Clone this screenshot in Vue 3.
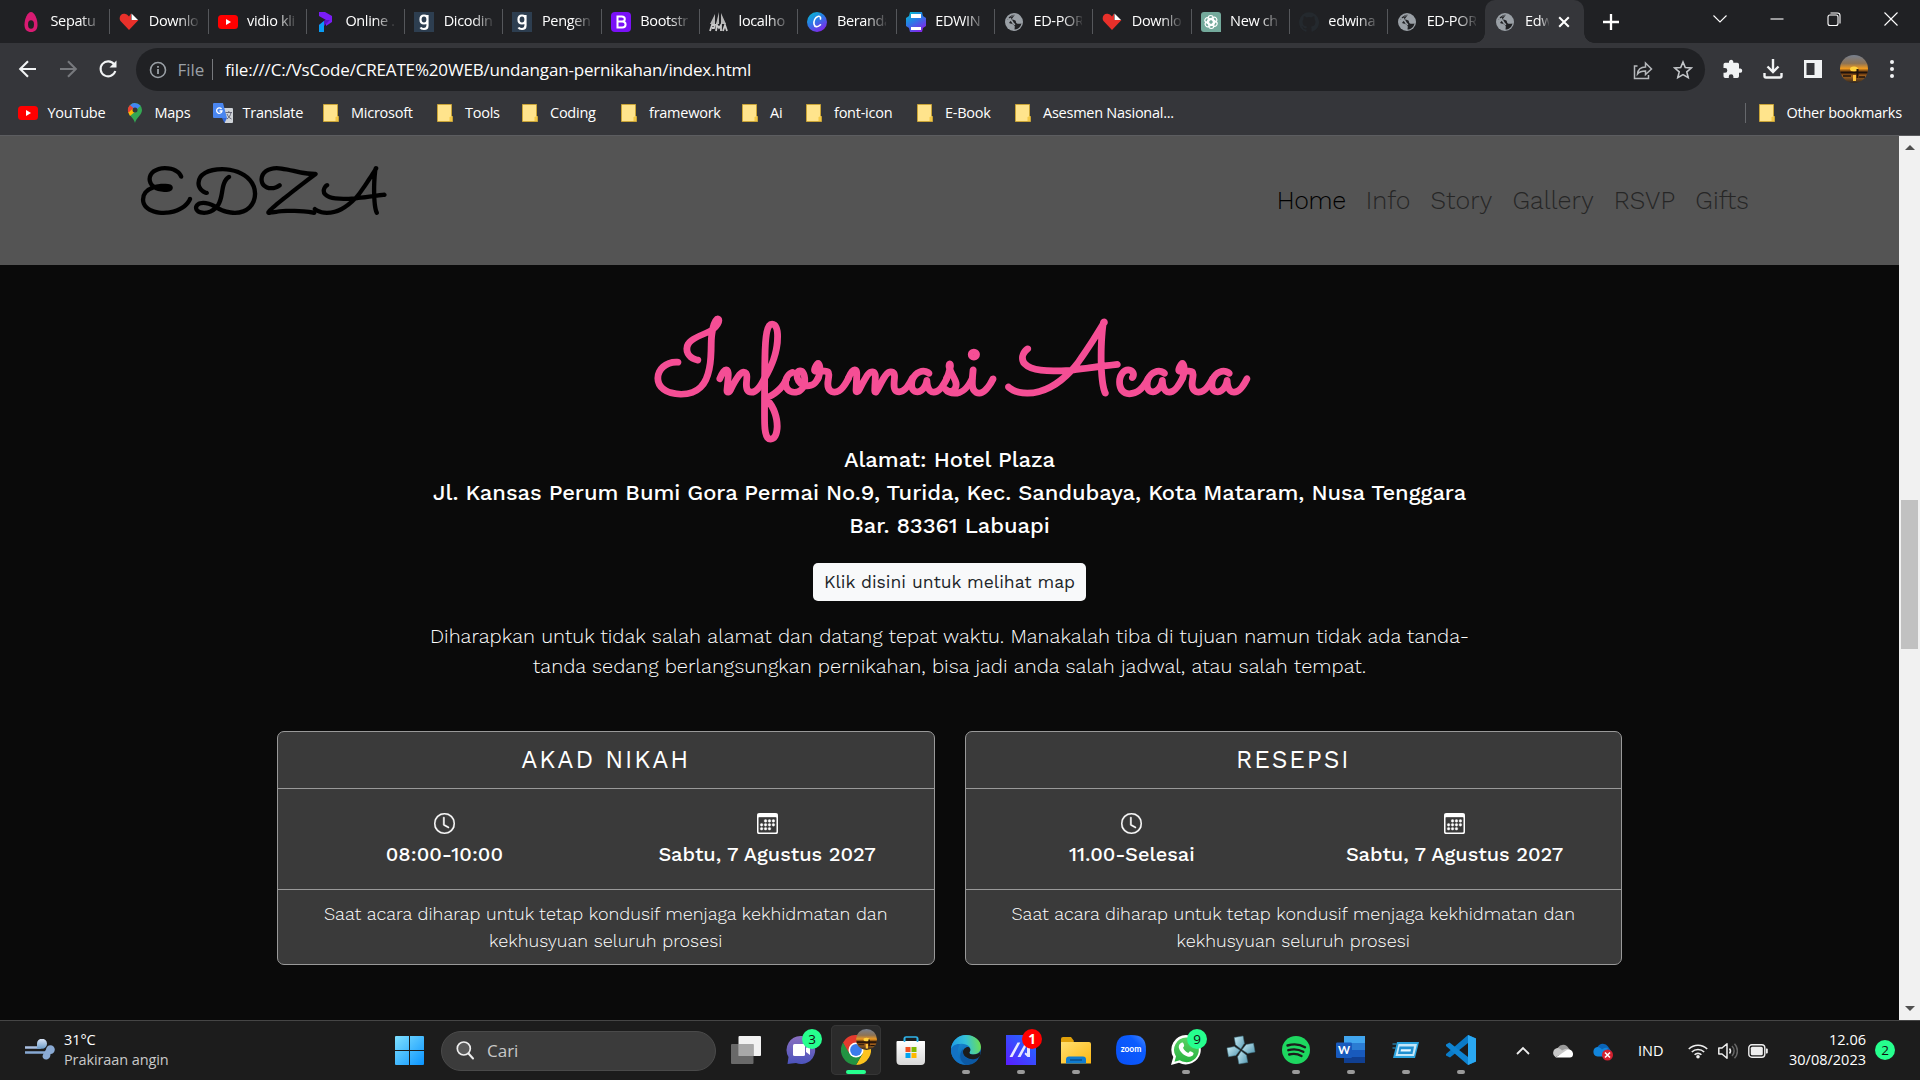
<script setup>
const tabs = [
  { icon: 'drop', title: 'Sepatu' },
  { icon: 'heart', title: 'Downlo' },
  { icon: 'youtube', title: 'vidio kli' },
  { icon: 'pay', title: 'Online .' },
  { icon: 'nine', title: 'Dicodin' },
  { icon: 'nine', title: 'Pengen' },
  { icon: 'bootstrap', title: 'Bootstr' },
  { icon: 'pma', title: 'localho' },
  { icon: 'canva', title: 'Beranda' },
  { icon: 'printer', title: 'EDWIN' },
  { icon: 'globe', title: 'ED-POR' },
  { icon: 'heart', title: 'Downlo' },
  { icon: 'gpt', title: 'New ch' },
  { icon: 'github', title: 'edwina' },
  { icon: 'globe', title: 'ED-POR' },
]

const bookmarks = [
  { icon: 'youtube', title: 'YouTube', width: 107 },
  { icon: 'maps', title: 'Maps', width: 88 },
  { icon: 'translate', title: 'Translate', width: 110 },
  { icon: 'folder', title: 'Microsoft', width: 114 },
  { icon: 'folder', title: 'Tools', width: 85 },
  { icon: 'folder', title: 'Coding', width: 99 },
  { icon: 'folder', title: 'framework', width: 121 },
  { icon: 'folder', title: 'Ai', width: 64 },
  { icon: 'folder', title: 'font-icon', width: 111 },
  { icon: 'folder', title: 'E-Book', width: 98 },
  { icon: 'folder', title: 'Asesmen Nasional...', width: 170 },
]

const links = ['Home', 'Info', 'Story', 'Gallery', 'RSVP', 'Gifts']

const events = [
  { name: 'AKAD NIKAH', time: '08:00-10:00', date: 'Sabtu, 7 Agustus 2027' },
  { name: 'RESEPSI', time: '11.00-Selesai', date: 'Sabtu, 7 Agustus 2027' },
]

const apps = [
  { icon: 'taskview' },
  { icon: 'teams', badge: '3' },
  { icon: 'chrome', active: true },
  { icon: 'store' },
  { icon: 'edge', open: true },
  { icon: 'myasus', badge: '1', alert: true, open: true },
  { icon: 'explorer', open: true },
  { icon: 'zoom', label: 'zoom' },
  { icon: 'whatsapp', badge: '9', open: true },
  { icon: 'ppsspp' },
  { icon: 'spotify', open: true },
  { icon: 'word', label: 'W', open: true },
  { icon: 'run', open: true },
  { icon: 'vscode', open: true },
]
</script>

<template>
  <div class="screen">
    <svg class="sprites" width="0" height="0">
      <defs>
        <linearGradient id="gCanva" x1="0" y1="0" x2=".6" y2="1"><stop offset="0" stop-color="#00c4cc" /><stop offset=".5" stop-color="#2a7be6" /><stop offset="1" stop-color="#7d2ae8" /></linearGradient>
        <linearGradient id="gWin" x1="0" y1="0" x2="1" y2="1"><stop offset="0" stop-color="#7fe0ff" /><stop offset="1" stop-color="#0a94ff" /></linearGradient>
        <linearGradient id="gTeams" x1="0" y1="0" x2="0" y2="1"><stop offset="0" stop-color="#8a70c0" /><stop offset="1" stop-color="#4b53bc" /></linearGradient>
        <linearGradient id="gEdge" x1="0" y1=".4" x2="1" y2=".3"><stop offset="0" stop-color="#1e9ee8" /><stop offset=".5" stop-color="#35c1d8" /><stop offset="1" stop-color="#6ee04d" /></linearGradient>
        <linearGradient id="gEdge2" x1="0" y1="0" x2=".8" y2="1"><stop offset="0" stop-color="#1b9de2" /><stop offset="1" stop-color="#0a4f9e" /></linearGradient>
        <linearGradient id="gAsus" x1="0" y1="1" x2="1" y2="0"><stop offset="0" stop-color="#5a1cff" /><stop offset="1" stop-color="#1a75ff" /></linearGradient>
        <linearGradient id="gFolder" x1="0" y1="0" x2="1" y2="1"><stop offset="0" stop-color="#ffdf70" /><stop offset="1" stop-color="#fdb813" /></linearGradient>
        <linearGradient id="gZoom" x1="0" y1="1" x2="1" y2="0"><stop offset="0" stop-color="#0a50f5" /><stop offset=".7" stop-color="#0b5cff" /><stop offset="1" stop-color="#4d8dff" /></linearGradient>
        <linearGradient id="gWa" x1="0" y1="0" x2="0" y2="1"><stop offset="0" stop-color="#5bd066" /><stop offset="1" stop-color="#27b43e" /></linearGradient>
        <linearGradient id="gPsp" x1="0" y1="0" x2="1" y2="1"><stop offset="0" stop-color="#c4e8f2" /><stop offset="1" stop-color="#5b9db5" /></linearGradient>
        <linearGradient id="gSun" x1="0" y1="0" x2="0" y2="1"><stop offset="0" stop-color="#77808f" /><stop offset=".3" stop-color="#8d7355" /><stop offset=".48" stop-color="#ef9a20" /><stop offset=".62" stop-color="#3a1c0b" /><stop offset=".75" stop-color="#a8641c" /><stop offset="1" stop-color="#2b2622" /></linearGradient>
        <linearGradient id="gWind" x1="0" y1="0" x2="0" y2="1"><stop offset="0" stop-color="#dbe6f8" /><stop offset="1" stop-color="#6d9cc9" /></linearGradient>
        <linearGradient id="gStore" x1="0" y1="0" x2="0" y2="1"><stop offset="0" stop-color="#fff" /><stop offset="1" stop-color="#d8d8d8" /></linearGradient>
      </defs>

      <symbol id="drop" viewBox="0 0 20 20"><path d="M10 0C13.5 0 16.500 7 16.500 12.500S14 20 10 20 3.500 18 3.500 12.500 6.500 0 10 0z" fill="#d81b72" /><ellipse cx="10" cy="12.500" rx="3" ry="4.200" fill="#202124" /></symbol>
      <symbol id="heart" viewBox="0 0 20 20"><path d="M10 18L1.500 9C-1 5 2.500.5 6.500 2 8.500 2.500 10 4.500 10 4.500L12 1.500V8h7.500z" fill="#e8302a" /><path d="M12.500 1.500L19 8h-6.500z" fill="#fff" /></symbol>
      <symbol id="youtube" viewBox="0 0 20 20"><rect y="3" width="20" height="14" rx="3.500" fill="#f00" /><path d="M8 7l5 3-5 3z" fill="#fff" /></symbol>
      <symbol id="pay" viewBox="0 0 20 20"><path d="M3 0h6l7 4v6l-6 4V8L3 4z" fill="#7a1cf5" /><path d="M3 13l6-5h5l-6 6z" fill="#5514c9" /><path d="M3 13l5-4v11H3z" fill="#0a9cf5" /></symbol>
      <symbol id="nine" viewBox="0 0 20 20"><path d="M0 0h20v20H0z" fill="#2d3e50" /><path d="M13.500 7.500c0 2.500-1.500 4-3.500 4s-3.500-1.500-3.500-4 1.500-4 3.500-4 3.500 1.500 3.500 4zM13.500 3v10.500c0 2.500-1.500 3.500-3.500 3.500-1.500 0-3-.5-3.500-1.500" fill="none" stroke="#fff" stroke-width="2.200" /></symbol>
      <symbol id="bootstrap" viewBox="0 0 20 20"><rect width="20" height="20" rx="4" fill="#7a11f7" /><path d="M6.500 4.500h4.300c4 0 4 5 0 5H6.500h4.700c4.500 0 4.500 6 0 6H6.500z" fill="none" stroke="#fff" stroke-width="2" /></symbol>
      <symbol id="pma" viewBox="0 0 20 20"><path d="M1 12L6 2v10zM7 12l3-12v12zM12 12V1l5 11z" fill="#b5b5b5" /><path d="M1 19l2-6h3l-1 3H3M7 19l1-6 2 3 2-3v6M14 19l2-6 2 6" fill="none" stroke="#c9c9c9" stroke-width="1.800" /></symbol>
      <symbol id="canva" viewBox="0 0 20 20"><circle cx="10" cy="10" r="10" fill="url(#gCanva)" /><path d="M13.500 7c.5-2-1-3.200-2.700-2.500C8 5.500 6.500 9 7 12s3.500 3.800 6.500.8" fill="none" stroke="#fff" stroke-width="1.600" stroke-linecap="round" /></symbol>
      <symbol id="printer" viewBox="0 0 20 20"><path d="M4 0h12l1 4 3 2v8l-3 2-1 4H4l-1-4-3-2V6l3-2z" fill="url(#gCanva)" /><path d="M5 2h10v4H5zM5 15h10v3H5z" fill="#fff" /></symbol>
      <symbol id="globe" viewBox="0 0 20 20"><circle cx="10" cy="10" r="9" fill="#9aa0a6" /><path d="M11 2.500c-4 1-5 3.500-3 5 2 .5 4 .5 4 2.500s3 2 5.500 1.500c-1 4-4 6-7 6 0-2 1-3-.5-4.500s-3-1-5-2M3.500 8C4.500 4.500 8 3 11 2.500" fill="#202124" /><path d="M4 6.500c2 1.500 4 1.500 4.500 3.500s2 1.500 2 3" fill="none" stroke="#9aa0a6" stroke-width="1.600" /></symbol>
      <symbol id="gpt" viewBox="0 0 20 20"><path d="M3 0h14a3 3 0 0 1 3 3v17H3a3 3 0 0 1-3-3V3a3 3 0 0 1 3-3z" fill="#74aa9c" /><g fill="none" stroke="#fff" stroke-width="1.100"><rect x="7.200" y="3.500" width="5" height="10" rx="2.500" /><rect x="7.200" y="3.500" width="5" height="10" rx="2.500" transform="rotate(60 10 10)" /><rect x="7.200" y="3.500" width="5" height="10" rx="2.500" transform="rotate(120 10 10)" /><rect x="7.200" y="3.500" width="5" height="10" rx="2.500" transform="rotate(180 10 10)" /><rect x="7.200" y="3.500" width="5" height="10" rx="2.500" transform="rotate(240 10 10)" /><rect x="7.200" y="3.500" width="5" height="10" rx="2.500" transform="rotate(300 10 10)" /></g></symbol>
      <symbol id="github" viewBox="0 0 16 16"><path fill="#24292e" d="M8 .2a8 8 0 0 0-2.530 15.590c.4.070.55-.17.550-.38v-1.490c-2.230.48-2.700-.95-2.700-.95-.36-.92-.89-1.170-.89-1.170-.73-.5.050-.49.050-.49.800.06 1.230.83 1.230.83.710 1.220 1.870.87 2.330.66.070-.52.280-.87.510-1.070-1.780-.2-3.640-.89-3.640-3.950 0-.87.310-1.590.82-2.150-.08-.2-.36-1.020.08-2.120 0 0 .67-.21 2.200.82a7.600 7.600 0 0 1 4 0c1.530-1.040 2.200-.82 2.200-.82.440 1.100.16 1.920.08 2.120.51.560.82 1.270.82 2.150 0 3.070-1.870 3.750-3.650 3.950.29.250.54.730.54 1.480v2.200c0 .21.150.46.550.38A8 8 0 0 0 8 .2z" /></symbol>
      <symbol id="maps" viewBox="0 0 20 20"><path d="M10 20C9 15 3 12 3 7a7 7 0 0 1 14 0c0 5-6 8-7 13z" fill="#34a853" /><path d="M5 2.300A7 7 0 0 0 3.500 10L10 7z" fill="#ea4335" /><path d="M3.300 9.500L10 3l2 4-7 6z" fill="#fbbc04" /><path d="M5 2.300A7 7 0 0 1 15.500 2.700L10 8z" fill="#4285f4" /><path d="M5 2.300L8.500 5 3.300 9.500C2.700 6.500 3.500 4 5 2.300z" fill="#ea4335" /><circle cx="10" cy="7" r="2.500" fill="#35363a" /></symbol>
      <symbol id="translate" viewBox="0 0 20 20"><path d="M8 5h11a1 1 0 0 1 1 1v13a1 1 0 0 1-1 1h-7z" fill="#cfd3d8" /><path d="M1 0h9l4 15H1a1 1 0 0 1-1-1V1a1 1 0 0 1 1-1z" fill="#4a86f0" /><path d="M9 15h5l-2.500 5z" fill="#3367d6" /><path d="M8.500 6A2.700 2.700 0 1 0 9 8H6.500" fill="none" stroke="#fff" stroke-width="1.300" /><path d="M12.500 9.500H19M15.800 8v1.500M18 9.500c-.5 3-2 5-4 6.500M14 11c.8 2 2.200 4 4.500 5" fill="none" stroke="#667" stroke-width="1" /></symbol>
      <symbol id="folder" viewBox="0 0 20 20"><path d="M.5 1.500h14v11.500l1 .5v5H.5z" fill="#ffe48c" stroke="#c9a437" /><path d="M12.500 18v-4l2.500-1v5z" fill="#f3c846" /></symbol>

      <symbol id="sunset" viewBox="0 0 28 28"><circle cx="14" cy="14" r="14" fill="url(#gSun)" /><ellipse cx="14" cy="14" rx="4" ry="2.500" fill="#ffd23f" /><path d="M13 20h3v6h-3z" fill="#ffc23a" /><path d="M16.500 14h2v9h-2z" fill="#20120a" /><path d="M1 17.500h26M3 21h8M19 22h6" stroke="#1c120c" stroke-width="1.500" /></symbol>

      <symbol id="clock" viewBox="0 0 16 16"><path d="M8 3.500a.5.5 0 0 0-1 0V9a.5.5 0 0 0 .252.434l3.500 2a.5.5 0 0 0 .496-.868L8 8.710z" /><path d="M8 16A8 8 0 1 0 8 0a8 8 0 0 0 0 16m7-8A7 7 0 1 1 1 8a7 7 0 0 1 14 0" /></symbol>
      <symbol id="calendar" viewBox="0 0 16 16"><path d="M14 0H2a2 2 0 0 0-2 2v12a2 2 0 0 0 2 2h12a2 2 0 0 0 2-2V2a2 2 0 0 0-2-2M1 3.857C1 3.384 1.448 3 2 3h12c.552 0 1 .384 1 .857v10.286c0 .473-.448.857-1 .857H2c-.552 0-1-.384-1-.857z" /><path d="M6.500 7a1 1 0 1 0 0-2 1 1 0 0 0 0 2m3 0a1 1 0 1 0 0-2 1 1 0 0 0 0 2m3 0a1 1 0 1 0 0-2 1 1 0 0 0 0 2m-9 3a1 1 0 1 0 0-2 1 1 0 0 0 0 2m3 0a1 1 0 1 0 0-2 1 1 0 0 0 0 2m3 0a1 1 0 1 0 0-2 1 1 0 0 0 0 2m3 0a1 1 0 1 0 0-2 1 1 0 0 0 0 2m-9 3a1 1 0 1 0 0-2 1 1 0 0 0 0 2m3 0a1 1 0 1 0 0-2 1 1 0 0 0 0 2m3 0a1 1 0 1 0 0-2 1 1 0 0 0 0 2" /></symbol>

      <symbol id="taskview" viewBox="0 0 30 30"><rect x="7.500" y="1" width="22.500" height="20" rx="1" fill="#f2f2f2" /><rect x="0" y="9" width="22.500" height="20" rx="1" fill="#777" opacity=".85" /><rect x="7.500" y="9" width="15" height="12" fill="#a8a8a8" /></symbol>
      <symbol id="teams" viewBox="0 0 30 30"><path d="M15 1a14 14 0 1 1-5 27L1.500 29l1-7A14 14 0 0 1 15 1z" fill="url(#gTeams)" /><rect x="7" y="9" width="12" height="12" rx="1.500" fill="#fff" /><path d="M20 13l4-3v10l-4-3z" fill="#fff" /></symbol>
      <symbol id="chrome" viewBox="0 0 30 30"><path d="M28 7.500H15l-8.500 11L2 7.500A15 15 0 0 1 28 7.500z" fill="#e33b2e" /><path d="M28 7.500A15 15 0 0 1 15 30l6.500-11.250L15 7.500z" fill="#fcc31e" /><path d="M2 7.500A15 15 0 0 0 15 30l6.500-11.250H8.500z" fill="#229342" /><circle cx="15" cy="15" r="7.500" fill="#fff" /><circle cx="15" cy="15" r="5.900" fill="#3a7cec" /></symbol>
      <symbol id="store" viewBox="0 0 30 30"><path d="M8.500 7V3.500a1.500 1.500 0 0 1 1.500-1.500h10a1.500 1.500 0 0 1 1.500 1.500V7" fill="none" stroke="#2fb4ea" stroke-width="1.600" /><path d="M1.500 6h27a.5.5 0 0 1 .5.500V26a4 4 0 0 1-4 4H4.500A4 4 0 0 1 .5 26V7a1 1 0 0 1 1-1z" fill="url(#gStore)" /><path d="M8.500 2.500V7M21.500 2.500V7" stroke="#2fb4ea" stroke-width="1.600" /><path d="M9.500 12h5v5h-5z" fill="#f25022" /><path d="M15.500 12h5v5h-5z" fill="#7fba00" /><path d="M9.500 18h5v5h-5z" fill="#00a4ef" /><path d="M15.500 18h5v5h-5z" fill="#ffb900" /></symbol>
      <symbol id="edge" viewBox="0 0 30 30"><circle cx="15" cy="15" r="15" fill="url(#gEdge2)" /><path d="M0 14C1 5 8 0 15 0c9 0 15 6 15 12 0 5-4 7.500-8 7.500-3 0-4-1-3.500-2.200C22 12 15 8 9 9c-4 .5-8 3-9 5z" fill="url(#gEdge)" /><path d="M9 9c-4 6-3 16 6 20.800C8 30 1 25 0 16c0-5 5-7.500 9-7z" fill="#1272c4" /><path d="M12 17c0 6 7 9.500 15.500 6.500C25 28 20 30 15.500 30 9 27 7 19 12 14z" fill="#0c59a4" /><path d="M12 17c0-3 3-5.500 5.500-5 2 1 2.500 3 1 5.300-.5 1.200.5 2.200 3.500 2.200 3.500 0 6-1 7.500-3l-.5 4.500c-3 3.500-6 3.500-9 3-5-.5-8-4-8-7z" fill="#1c1c1c" /></symbol>
      <symbol id="myasus" viewBox="0 0 30 30"><path d="M0 0h30v30H0z" fill="url(#gAsus)" /><path d="M3.500 22L11.500 7.500l2.800 0-7.800 14.500zM11.500 22L19.500 7.500l2.800 0L14.500 22zM21 8h3v14h-2.500l-3-3 1-1.500 1.500 1z" fill="#e7e8ff" /></symbol>
      <symbol id="explorer" viewBox="0 0 30 30"><path d="M0 4a2 2 0 0 1 2-2h8l3 4-1 2H0z" fill="#e0a00a" /><path d="M0 7h28a2 2 0 0 1 2 2v19.500H0z" fill="url(#gFolder)" /><path d="M5 28.500v-4a3 3 0 0 1 3-3h14a3 3 0 0 1 3 3v4z" fill="#0f7cd0" /><path d="M9 25h12" stroke="#0b4f8c" stroke-width="1.500" /></symbol>
      <symbol id="zoom" viewBox="0 0 30 30"><path d="M15 0c11 0 15 4 15 15s-4 15-15 15S0 26 0 15 4 0 15 0z" fill="url(#gZoom)" /></symbol>
      <symbol id="whatsapp" viewBox="0 0 30 30"><path d="M15 0a15 14.700 0 1 1-7 27.800L0 30l2.300-8A15 14.700 0 0 1 15 0z" fill="#fff" /><path d="M15.200 2.600a12.300 12.300 0 1 1-6.400 22.600L3.500 26.700 5 21.500A12.300 12.300 0 0 1 15.200 2.600z" fill="url(#gWa)" /><path d="M10.500 7.800c1-.6 1.900 0 2.300 1.500.6 1.700.5 1.800-.8 3.400 1.200 2.500 2.700 4 5.300 5.200 1.500-1.700 1.700-2 3.300-1.100 2.200 1 2.200 1.200 1.700 2.800-.8 2-3.400 2.600-5.800 1.800C12 20 8.500 16 7.800 12.500c-.3-2 1-4 2.700-4.700z" fill="#fff" /></symbol>
      <symbol id="ppsspp" viewBox="0 0 30 30"><g transform="rotate(-10 15 15)" fill="url(#gPsp)" stroke="#40717f" stroke-width=".5"><path d="M10.500 1.500h9V9L15 14l-4.500-5z" /><path d="M10.500 28.500h9V21L15 16l-4.500 5z" /><path d="M1.500 10.500v9H9l5-4.500-5-4.500z" /><path d="M28.500 10.500v9H21L16 15l5-4.500z" /></g></symbol>
      <symbol id="spotify" viewBox="0 0 30 30"><circle cx="15" cy="15" r="14" fill="#1ed760" /><path d="M6.500 10.500c6-1.800 12.500-1.200 17.500 1.700M7.300 15.200c5.200-1.500 10.500-.9 15 1.600M8.200 19.500c4.300-1.200 8.500-.7 12.300 1.500" fill="none" stroke="#1c1c1c" stroke-width="2.400" stroke-linecap="round" /></symbol>
      <symbol id="word" viewBox="0 0 30 30"><path d="M8 1h21v7H8z" fill="#41a5ee" /><path d="M8 8h21v7H8z" fill="#2b7cd3" /><path d="M8 15h21v7H8z" fill="#185abd" /><path d="M8 22h21v6H8z" fill="#103f91" /><rect x="0" y="7.500" width="16" height="15.500" rx="1.200" fill="#185abd" /></symbol>
      <symbol id="run" viewBox="0 0 30 30"><path d="M6 7h22l-4 16H2z" fill="#2aa3df" /><path d="M7.500 9h18.500l-3 12H4.500z" fill="#c3e6f8" /><path d="M8.500 11.500h14.500l-1.500 7.500H7z" fill="#1f8fd0" /><path d="M10 14.300h10l-.5 2.200h-10z" fill="#e6f7ff" /><path d="M1.500 9h4M1.500 13h3" stroke="#2aa3df" stroke-width="1.200" /></symbol>
      <symbol id="vscode" viewBox="0 0 30 30"><path d="M22 0l8 3.500v23L22 30V8L4 22.500 0 20.500v-1.500z" fill="#0a7bc8" /><path d="M0 11v-1.500l3.500-2L22 22v8L4 14.500z" fill="#0f84d2" /><path d="M22 0l8 3.500v23L22 30z" fill="#2aa8f2" /></symbol>
    </svg>

    <header class="browser">
      <div class="tabstrip">
        <div v-for="(tab, i) in tabs" :key="i" class="tab" :class="{ last: i === tabs.length - 1 }">
          <svg class="fav"><use :href="'#' + tab.icon" /></svg>
          <span class="tab-title">{{ tab.title }}</span>
        </div>
        <div class="tab current">
          <svg class="fav"><use href="#globe" /></svg>
          <span class="tab-title">Edw</span>
          <svg class="tab-close" viewBox="0 0 10 10"><path d="M1 1l8 8M9 1L1 9" stroke="#fff" stroke-width="1.700" /></svg>
        </div>
        <svg class="new-tab" viewBox="0 0 16 16"><path d="M8 0v16M0 8h16" stroke="#fff" stroke-width="2.300" /></svg>
        <div class="window-controls">
          <svg viewBox="0 0 16 16"><path d="M1.500 4.500L8 11l6.500-6.500" /></svg>
          <svg viewBox="0 0 16 16"><path d="M1.500 8h13" /></svg>
          <svg viewBox="0 0 16 16"><rect x="2" y="4" width="10" height="10.500" rx="2" /><path d="M4.500 2h7a2.500 2.500 0 0 1 2.500 2.500v8" /></svg>
          <svg viewBox="0 0 16 16"><path d="M1.500 1.500l13 13M14.500 1.500l-13 13" /></svg>
        </div>
      </div>

      <div class="toolbar">
        <div class="nav-buttons">
          <svg viewBox="0 0 20 20" stroke="#f1f3f4"><path d="M18 10H2.500M10 2.200L2.200 10l7.800 7.800" /></svg>
          <svg viewBox="0 0 20 20" stroke="#77797d"><path d="M2 10h15.500M10 2.200l7.800 7.800-7.800 7.800" /></svg>
          <svg viewBox="0 0 20 20" stroke="#f1f3f4"><path d="M16.200 5.500A7.500 7.500 0 1 0 17.300 12" /><path d="M18.500 1.500v7h-7z" fill="#f1f3f4" stroke="none" /></svg>
        </div>
        <div class="omnibox">
          <svg class="info" viewBox="0 0 18 18"><circle cx="9" cy="9" r="7.500" fill="none" stroke="#9aa0a6" stroke-width="1.600" /><path d="M9 8v5M9 5v1.700" stroke="#9aa0a6" stroke-width="1.800" /></svg>
          <span class="scheme">File</span>
          <span class="url">file:///C:/VsCode/CREATE%20WEB/undangan-pernikahan/index.html</span>
          <svg class="share" viewBox="0 0 20 20"><path d="M4.500 6H1.500v12.500h14V15M4.500 14c.5-5 3.500-7 8-7V3l6 6-6 5.500V11c-4 0-6 .5-8 3z" fill="none" stroke="#b5b8bb" stroke-width="1.500" /></svg>
          <svg class="star" viewBox="0 0 20 20"><path d="M10 2l2.300 5.500 6 .5-4.500 3.900 1.400 5.800L10 14.600l-5.200 3.100 1.400-5.800L1.700 8l6-.5z" fill="none" stroke="#c3c6c9" stroke-width="1.600" /></svg>
        </div>
        <div class="tools">
          <svg viewBox="0 0 20 20"><path d="M17.500 9.500H16V5.500a1.700 1.700 0 0 0-1.700-1.700h-4V2.500a2.200 2.200 0 0 0-4.300 0v1.300H2.200A1.700 1.700 0 0 0 .5 5.500v3.600H2a2.300 2.300 0 0 1 0 4.600H.5v3.600A1.700 1.700 0 0 0 2.200 19h3.600v-1.400a2.300 2.300 0 0 1 4.600 0V19H14.300a1.700 1.700 0 0 0 1.700-1.700v-3.500h1.500a2.200 2.200 0 0 0 0-4.300z" fill="#f1f3f4" /></svg>
          <svg viewBox="0 0 20 20"><path d="M10 0v12M4.500 7.500L10 13l5.500-5.500M1.500 14v3a1.500 1.500 0 0 0 1.500 1.500h14a1.500 1.500 0 0 0 1.500-1.500v-3" fill="none" stroke="#f1f3f4" stroke-width="2.400" /></svg>
          <svg viewBox="0 0 20 20"><path d="M1 1h18v18H1zM3.500 4v12h8V4z" fill="#f1f3f4" fill-rule="evenodd" /></svg>
          <svg class="avatar"><use href="#sunset" /></svg>
          <svg class="kebab" viewBox="0 0 6 20" fill="#f1f3f4"><circle cx="3" cy="3" r="2" /><circle cx="3" cy="10" r="2" /><circle cx="3" cy="17" r="2" /></svg>
        </div>
      </div>

      <nav class="bookmarks">
        <div v-for="mark in bookmarks" :key="mark.title" class="bookmark" :style="{ width: mark.width + 'px' }">
          <svg :class="mark.icon === 'folder' ? 'folder' : 'site'"><use :href="'#' + mark.icon" /></svg>
          <span>{{ mark.title }}</span>
        </div>
        <div class="bookmark other">
          <svg class="folder"><use href="#folder" /></svg>
          <span>Other bookmarks</span>
        </div>
      </nav>
    </header>

    <main class="viewport">
      <div class="page">
        <div class="navbar">
          <div class="brand">EDZA</div>
          <div class="menu">
            <a v-for="(link, i) in links" :key="link" :class="{ on: i === 0 }">{{ link }}</a>
          </div>
        </div>
        <section class="info-section">
          <h1>Informasi Acara</h1>
          <p class="address">
            <span>Alamat: Hotel Plaza</span>
            <span>Jl. Kansas Perum Bumi Gora Permai No.9, Turida, Kec. Sandubaya, Kota Mataram, Nusa Tenggara</span>
            <span>Bar. 83361 Labuapi</span>
          </p>
          <a class="map-button">Klik disini untuk melihat map</a>
          <p class="note">Diharapkan untuk tidak salah alamat dan datang tepat waktu. Manakalah tiba di tujuan namun tidak ada tanda-<br />tanda sedang berlangsungkan pernikahan, bisa jadi anda salah jadwal, atau salah tempat.</p>
          <div class="cards">
            <article v-for="event in events" :key="event.name" class="card">
              <h2>{{ event.name }}</h2>
              <div class="when">
                <div>
                  <svg><use href="#clock" /></svg>
                  <span>{{ event.time }}</span>
                </div>
                <div>
                  <svg><use href="#calendar" /></svg>
                  <span>{{ event.date }}</span>
                </div>
              </div>
              <footer>Saat acara diharap untuk tetap kondusif menjaga kekhidmatan dan<br />kekhusyuan seluruh prosesi</footer>
            </article>
          </div>
        </section>
      </div>
      <div class="scrollbar">
        <i class="arrow up"></i>
        <i class="thumb"></i>
        <i class="arrow down"></i>
      </div>
    </main>

    <footer class="taskbar">
      <div class="weather">
        <svg viewBox="0 0 30 22"><path d="M0 8.500h15" stroke="#a9c0e2" stroke-width="2.400" stroke-linecap="round" /><path d="M0 13.500h22" stroke="#86a8d2" stroke-width="2.400" stroke-linecap="round" /><path d="M12 9.700V5a5 5 0 1 1 5 4.700z" fill="url(#gWind)" /><path d="M21 10.500a4.400 4.400 0 1 1 4.500 4.500c0 3-1.500 5.500-4.500 5.500a3.800 3.800 0 0 1-3.500-3.500l1-2.500z" fill="#8aaad4" /></svg>
        <div><b>31°C</b><span>Prakiraan angin</span></div>
      </div>
      <svg class="start" viewBox="0 0 29 29" fill="url(#gWin)"><path d="M1 0h13v14H0V1a1 1 0 0 1 1-1zM15 0h13a1 1 0 0 1 1 1v13H15zM0 15h14v14H1a1 1 0 0 1-1-1zM15 15h14v13a1 1 0 0 1-1 1H15z" /></svg>
      <div class="search">
        <svg viewBox="0 0 18 19"><circle cx="7.800" cy="7.500" r="6.500" fill="#5a5a5a" stroke="#eee" stroke-width="1.700" /><path d="M12.500 12.500l4.500 5" stroke="#eee" stroke-width="2" stroke-linecap="round" /></svg>
        <span>Cari</span>
      </div>
      <div class="apps">
        <div v-for="app in apps" :key="app.icon" class="app">
          <div class="tile" :class="{ active: app.active }">
            <svg class="app-icon"><use :href="'#' + app.icon" /></svg>
            <span v-if="app.label" class="label" :class="app.icon">{{ app.label }}</span>
            <i v-if="app.badge" class="badge" :class="{ alert: app.alert }">{{ app.badge }}</i>
            <svg v-if="app.active" class="profile"><use href="#sunset" /></svg>
            <i v-if="app.active || app.open" class="indicator" :class="{ wide: app.active }"></i>
          </div>
        </div>
      </div>
      <div class="tray">
        <svg class="chev" viewBox="0 0 14 9"><path d="M1 8l6-6 6 6" fill="none" stroke="#eee" stroke-width="1.800" /></svg>
        <svg class="cloud" viewBox="0 0 20 14"><path d="M5 3.500A6 6 0 0 1 15.500 4L19 8 8 11 1 8z" fill="#9a9a9a" /><path d="M4.500 4a5 5 0 0 0-2 9.200L16 5.500A4 4 0 0 0 12 5L9 6.500C8 5 6 4 4.500 4z" fill="#c8c8c8" /><path d="M2.500 13.500L13 6.500C16 4 20.500 7 20 10.500a3.200 3.200 0 0 1-3 3z" fill="#fff" /></svg>
        <svg class="drive" viewBox="0 0 20 18"><path d="M4.500 4A6 6 0 0 1 15 3.500L18 8 8 11 1 8z" fill="#0a64b8" /><path d="M4.500 4a4.800 4.800 0 0 0 0 9.500H12L15 5C12 4 10 5.500 9 6.500 8 5 6 4 4.500 4z" fill="#1285db" /><circle cx="14.500" cy="12" r="5.500" fill="#d3202f" /><path d="M12 9.500l5 5M17 9.500l-5 5" stroke="#fff" stroke-width="1.600" /></svg>
        <span class="lang">IND</span>
        <svg class="wifi" viewBox="0 0 20 16"><path d="M.8 6a13 13 0 0 1 18.400 0M3.800 9a8.800 8.800 0 0 1 12.400 0M6.600 11.800a4.800 4.800 0 0 1 6.800 0" fill="none" stroke="#eee" stroke-width="1.600" /><circle cx="10" cy="13.800" r="1.800" fill="#eee" /></svg>
        <svg class="sound" viewBox="0 0 20 18"><path d="M.8 6H4l5-4.200v14.400L4 12H.8z" fill="none" stroke="#eee" stroke-width="1.500" stroke-linejoin="round" /><path d="M11.500 6.500a4 4 0 0 1 0 5" fill="none" stroke="#eee" stroke-width="1.500" /><path d="M14 4a7 7 0 0 1 0 10M16.500 1.800a10.500 10.500 0 0 1 0 14.500" fill="none" stroke="#666" stroke-width="1.500" /></svg>
        <svg class="battery" viewBox="0 0 20 14"><rect x=".8" y=".8" width="16" height="12.400" rx="3" fill="none" stroke="#eee" stroke-width="1.400" /><rect x="2.800" y="2.800" width="12" height="8.400" rx="1.500" fill="#eee" /><path d="M18 4.500h.8a1 1 0 0 1 1 1v3a1 1 0 0 1-1 1H18z" fill="#eee" /></svg>
        <div class="datetime"><span>12.06</span><span>30/08/2023</span></div>
        <i class="count">2</i>
      </div>
    </footer>
  </div>
</template>

<style>
body {
  background: #0a0a0a;
  overflow: hidden;
}
</style>

<style scoped>
* {
  box-sizing: border-box;
}
.screen {
  display: flex;
  flex-direction: column;
  width: 1920px;
  height: 1080px;
  overflow: hidden;
  font-family: 'Segoe UI', 'Open Sans', sans-serif;
  color: #fff;
}
.sprites {
  position: absolute;
}
i {
  font-style: normal;
}

/* Browser window */
.browser {
  flex: none;
  height: 136px;
  background: #35363a;
  border-bottom: 1px solid #5c5d60;
}
.tabstrip {
  display: flex;
  align-items: center;
  height: 43px;
  padding-left: 12px;
  background: #202124;
}
.tab {
  display: flex;
  align-items: center;
  position: relative;
  width: 98.300px;
  height: 43px;
  padding-left: 9px;
  flex: none;
}
.tab:not(.last):not(.current)::after {
  content: '';
  position: absolute;
  right: 0;
  top: 9px;
  width: 1px;
  height: 25px;
  background: #55575b;
}
.fav {
  flex: none;
  width: 20px;
  height: 20px;
}
.tab-title {
  width: 49px;
  margin-left: 9.500px;
  overflow: hidden;
  white-space: nowrap;
  font-size: 14.500px;
  letter-spacing: -0.350px;
  line-height: 20px;
  margin-top: -1px;
  -webkit-mask-image: linear-gradient(90deg, #000 60%, transparent 105%);
  mask-image: linear-gradient(90deg, #000 60%, transparent 105%);
}
.tab.current {
  margin-left: -1px;
  padding-left: 10px;
  background: #35363a;
  border-radius: 10px 10px 0 0;
}
.tab.current::before,
.tab.current::after {
  content: '';
  position: absolute;
  bottom: 0;
  width: 10px;
  height: 10px;
}
.tab.current::before {
  left: -10px;
  background: radial-gradient(circle at 0 0, transparent 9.500px, #35363a 10px);
}
.tab.current::after {
  right: -10px;
  background: radial-gradient(circle at 100% 0, transparent 9.500px, #35363a 10px);
}
.current .tab-title {
  width: 24px;
}
.tab-close {
  width: 12px;
  height: 12px;
  margin-left: 9px;
}
.new-tab {
  width: 16px;
  height: 16px;
  margin-left: 19px;
}
.window-controls {
  display: flex;
  gap: 41px;
  margin-left: auto;
  margin-right: 21px;
  margin-top: -6px;
}
.window-controls svg {
  width: 16px;
  height: 16px;
  fill: none;
  stroke: #fff;
  stroke-width: 1.100;
}
.toolbar {
  display: flex;
  align-items: center;
  height: 53px;
}
.nav-buttons {
  display: flex;
  gap: 20px;
  width: 135.500px;
  padding-left: 18px;
  margin-top: -2px;
}
.nav-buttons svg {
  width: 20px;
  height: 20px;
  fill: none;
  stroke-width: 2.100;
}
.omnibox {
  display: flex;
  align-items: center;
  width: 1569px;
  height: 43px;
  padding: 0 12px 0 13px;
  border-radius: 22px;
  background: #202124;
}
.info {
  width: 18px;
  height: 18px;
}
.scheme {
  width: 35px;
  margin-left: 11px;
  border-right: 1px solid #77797d;
  color: #9aa0a6;
  font-size: 17px;
  line-height: 21px;
}
.url {
  margin-left: 12.500px;
  font-size: 17px;
  letter-spacing: -0.170px;
}
.share {
  width: 20px;
  height: 20px;
  margin-left: auto;
}
.star {
  width: 20px;
  height: 20px;
  margin-left: 20px;
}
.tools {
  display: flex;
  align-items: center;
  padding-left: 18px;
  margin-top: -2px;
}
.tools svg {
  width: 20px;
  height: 20px;
  margin-right: 20px;
}
.tools .avatar {
  width: 28px;
  height: 28px;
  margin: 0 21px 0 -3px;
}
.tools .kebab {
  width: 6px;
  margin: 0;
}
.bookmarks {
  display: flex;
  height: 33px;
  padding-left: 18px;
}
.bookmark {
  display: flex;
  flex: none;
  align-items: center;
  font-size: 14.500px;
  letter-spacing: -0.250px;
  white-space: nowrap;
}
.bookmark svg {
  flex: none;
  width: 20px;
  height: 20px;
}
.bookmark .site {
  margin-right: 9.500px;
}
.bookmark .folder {
  margin: 0 8px 0 0;
}
.bookmark.other {
  position: relative;
  margin-left: auto;
  padding-left: 14px;
  width: 175.500px;
}
.bookmark.other::before {
  content: '';
  position: absolute;
  left: 0;
  top: 7px;
  width: 1px;
  height: 20px;
  background: #66686c;
}

/* Invitation page */
.viewport {
  display: flex;
  flex: none;
  height: 884px;
}
.page {
  width: 1899px;
  background: #0a0a0a;
  font-family: 'Work Sans', Inter, sans-serif;
}
.navbar {
  display: flex;
  align-items: center;
  justify-content: space-between;
  height: 129px;
  padding: 0 150px 0 140px;
  background: #545454;
}
.brand {
  margin-top: -2px;
  color: #000;
  font: 700 64px/90px Sacramento, 'Liberation Serif', serif;
}
.menu {
  display: flex;
  gap: 20px;
  margin-top: -1px;
  font-size: 25px;
  font-weight: 300;
  letter-spacing: 0.100px;
  color: #262626;
}
.menu .on {
  color: #000;
  letter-spacing: -0.300px;
}
.info-section {
  display: flex;
  flex-direction: column;
  align-items: center;
  padding-top: 58px;
  text-align: center;
}
h1 {
  margin: 0;
  color: #f54e95;
  font: 700 100px/100px Sacramento, 'Liberation Serif', serif;
  white-space: nowrap;
}
.address {
  display: flex;
  flex-direction: column;
  margin: 20px 0 21px;
  font-size: 22px;
  font-weight: 500;
  line-height: 33px;
  letter-spacing: -0.050px;
  white-space: nowrap;
}
.map-button {
  width: 273px;
  height: 38px;
  border-radius: 5px;
  background: #f8f9fa;
  color: #212529;
  font-size: 17.500px;
  line-height: 39px;
}
.note {
  margin: 20px 0 50px;
  color: #fff;
  font-size: 20px;
  font-weight: 300;
  line-height: 30px;
  white-space: nowrap;
}
.cards {
  display: flex;
  gap: 30px;
  width: 1345px;
}
.card {
  flex: 1;
  height: 234px;
  border: 1px solid #999;
  border-radius: 7px;
  background: #3a3a3a;
}
h2 {
  height: 57px;
  margin: 0;
  border-bottom: 1px solid #999;
  font-size: 24.500px;
  font-weight: 400;
  line-height: 56px;
  letter-spacing: 1.900px;
}
.when {
  display: flex;
  height: 101px;
  padding: 24px 5px 0;
  border-bottom: 1px solid #999;
}
.when div {
  display: flex;
  flex: 1;
  flex-direction: column;
  align-items: center;
  gap: 5px;
}
.when svg {
  width: 21px;
  height: 21px;
  fill: #fff;
  stroke: #fff;
  stroke-width: 0.300;
}
.when span {
  font-size: 20px;
  font-weight: 500;
  line-height: 31px;
}
.card footer {
  padding-top: 10px;
  color: #fff;
  font-size: 18px;
  font-weight: 300;
  line-height: 27px;
  white-space: nowrap;
}
.scrollbar {
  display: flex;
  flex-direction: column;
  align-items: center;
  width: 21px;
  background: #f1f1f1;
}
.arrow {
  border: 5px solid transparent;
}
.up {
  margin-top: 4px;
  border-bottom-color: #505050;
}
.down {
  margin: auto 0 4px;
  border-top-color: #505050;
}
.thumb {
  width: 17px;
  height: 149px;
  margin-top: 350px;
  background: #c1c1c1;
}

/* Taskbar */
.taskbar {
  display: flex;
  align-items: center;
  height: 60px;
  border-top: 1px solid #454545;
  background: #1c1c1c;
}
.weather {
  display: flex;
  align-items: center;
  width: 395px;
  padding-left: 25px;
  margin-top: -1px;
}
.weather svg {
  width: 30px;
  height: 22px;
}
.weather div {
  display: flex;
  flex-direction: column;
  margin-left: 9px;
  font-size: 14.500px;
  line-height: 20px;
  letter-spacing: -0.100px;
}
.weather b {
  font-weight: 400;
}
.weather span {
  color: #c9c9c9;
}
.start {
  width: 29px;
  height: 29px;
}
.search {
  display: flex;
  align-items: center;
  width: 275px;
  height: 40px;
  margin-left: 17px;
  padding: 0 0 1px 14px;
  border: 1px solid #4a4a4a;
  border-radius: 20px;
  background: #3b3b3b;
  color: #c8c8c8;
  font-size: 17px;
}
.search svg {
  width: 18px;
  height: 19px;
  margin-right: 13px;
}
.apps {
  display: flex;
  margin: -2px 0 0 2.500px;
}
.app {
  display: flex;
  justify-content: center;
  width: 55px;
}
.tile {
  display: flex;
  align-items: center;
  justify-content: center;
  position: relative;
  width: 50px;
  height: 50px;
  border-radius: 5px;
}
.tile.active {
  background: #2b2b2b;
  box-shadow: inset 0 0 0 1px #363636;
}
.app-icon {
  width: 30px;
  height: 30px;
}
.label {
  position: absolute;
  font-family: Lato, sans-serif;
  font-weight: 700;
  line-height: 16px;
}
.label.zoom {
  top: 16px;
  left: 14px;
  width: 22px;
  font-size: 8.500px;
  text-align: center;
}
.label.word {
  top: 17px;
  left: 10px;
  width: 16px;
  font-size: 11.500px;
  text-align: center;
}
.badge,
.count {
  border-radius: 50%;
  background: #26ff8e;
  color: #111;
  font-size: 13.500px;
  text-align: center;
}
.badge {
  position: absolute;
  top: 4px;
  right: 4px;
  width: 20px;
  height: 20px;
  line-height: 20px;
}
.badge.alert {
  background: #f00;
  color: #fff;
  font-weight: 700;
}
.profile {
  position: absolute;
  top: 4px;
  right: 4px;
  width: 21px;
  height: 21px;
}
.indicator {
  position: absolute;
  bottom: 1px;
  left: 21px;
  width: 8px;
  height: 4px;
  border-radius: 2px;
  background: #9a9a9a;
}
.indicator.wide {
  left: 15px;
  width: 20px;
  background: #26ff8e;
}
.tray {
  display: flex;
  align-items: center;
  margin-left: auto;
  padding-right: 25px;
}
.chev {
  width: 14px;
  height: 9px;
  margin-right: 23px;
}
.cloud {
  width: 20px;
  height: 14px;
  margin-right: 20px;
}
.drive {
  width: 20px;
  height: 18px;
  margin: 3px 25px 0 0;
}
.lang {
  width: 25px;
  margin-right: 25px;
  font-size: 14.500px;
}
.wifi {
  width: 20px;
  height: 16px;
  margin-right: 10px;
}
.sound {
  width: 20px;
  height: 18px;
  margin-right: 10px;
}
.battery {
  width: 20px;
  height: 14px;
}
.datetime {
  display: flex;
  flex-direction: column;
  width: 98px;
  margin: -2px 9px 0 0;
  font-size: 14.500px;
  line-height: 20px;
  letter-spacing: 0;
  text-align: right;
}
.count {
  width: 20px;
  height: 20px;
  margin-top: -1px;
  line-height: 20px;
}
</style>
